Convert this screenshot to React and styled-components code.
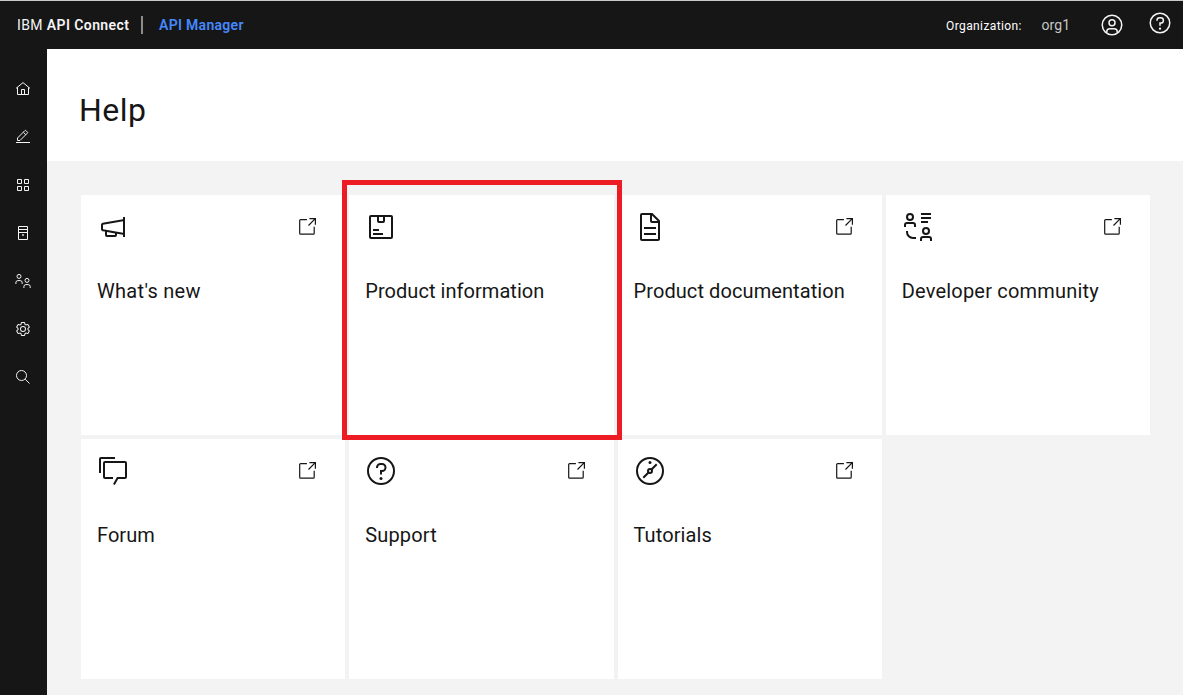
import React from "react";
import styled, { createGlobalStyle } from "styled-components";

const GlobalStyle = createGlobalStyle`
  * { box-sizing: border-box; }
  body { margin: 0; background: #fff; font-family: Roboto, "Liberation Sans", sans-serif; color: #161616; }
`;

const Shell = styled.div`
  width: 1183px;
  height: 695px;
  display: flex;
  flex-direction: column;
  overflow: hidden;
`;

const Header = styled.header`
  height: 49px;
  flex: none;
  display: flex;
  align-items: center;
  padding: 0 11px 0 17px;
  background: #161616;
  border-top: 1px solid #c6cac8;
  color: #f4f4f4;
  font-size: 14px;
  white-space: nowrap;
`;

const Brand = styled.div`
  width: 124px;
  letter-spacing: 0.4px;
  strong { font-weight: 600; }
`;

const Divider = styled.span`
  width: 2px;
  height: 18px;
  background: #8d8d8d;
  margin-right: 16px;
`;

const AppName = styled.div`
  color: #4589ff;
  font-weight: 600;
  letter-spacing: 0.3px;
  flex: 1;
`;

const OrgLabel = styled.span`
  width: 95px;
  padding-top: 2px;
  color: #fff;
  font-size: 12px;
  letter-spacing: 0.4px;
`;

const OrgName = styled.span`
  width: 59px;
  padding-left: 0.5px;
  color: #c6c6c6;
  letter-spacing: 0.1px;
`;

const HeaderIcon = styled.span`
  display: flex;
  margin-left: ${(p) => p.$gap || 0}px;
  padding-bottom: ${(p) => p.$lift || 0}px;
`;

const Body = styled.div`
  flex: 1;
  display: flex;
  min-height: 0;
`;

const Sidebar = styled.nav`
  width: 47px;
  flex: none;
  display: flex;
  flex-direction: column;
  padding-top: 16px;
  background: #161616;
`;

const NavItem = styled.a`
  height: 48px;
  display: flex;
  align-items: center;
  padding-left: 15px;
  color: #f4f4f4;
`;

const Main = styled.main`
  flex: 1;
  display: flex;
  flex-direction: column;
  background: #f3f3f3;
`;

const TitleBar = styled.div`
  height: 112px;
  display: flex;
  align-items: center;
  padding: 10px 0 0 32px;
  background: #fff;
`;

const Title = styled.h1`
  margin: 0;
  font-size: 32px;
  line-height: 40px;
  font-weight: 400;
  letter-spacing: 0.5px;
`;

const Tiles = styled.div`
  display: grid;
  grid-template-columns: repeat(4, 1fr);
  grid-auto-rows: 240px;
  gap: 4px;
  padding: 34px 33px 0 34px;
`;

const Tile = styled.a`
  position: relative;
  display: flex;
  flex-direction: column;
  padding: 16px;
  background: #fff;
`;

const TileTop = styled.div`
  height: 32px;
  display: flex;
  justify-content: space-between;
  padding-right: 11px;
`;

const LaunchSlot = styled.span`
  display: flex;
  padding-top: 6px;
`;

const TileLabel = styled.div`
  margin-top: 34px;
  font-size: 20px;
  line-height: 28px;
  letter-spacing: ${(p) => p.$spacing}px;
  white-space: nowrap;
`;

const Highlight = styled.div`
  position: absolute;
  z-index: 2;
  left: -7px;
  top: -15px;
  width: 280px;
  height: 260px;
  border: 5px solid #ed1c24;
`;

const Glyph = ({ size = 32, children }) => (
  <svg width={size} height={size} viewBox="0 0 32 32" fill="currentColor">{children}</svg>
);

const NavGlyph = ({ children }) => (
  <svg width="16" height="16" viewBox="0 0 16 16" fill="none" stroke="currentColor" strokeWidth="1">{children}</svg>
);

const HelpShape = () => (
  <>
    <path d="M16,2A14,14,0,1,0,30,16,14,14,0,0,0,16,2Zm0,26A12,12,0,1,1,28,16,12,12,0,0,1,16,28Z" />
    <circle cx="16" cy="23.5" r="1.5" />
    <path d="M17,8H15.5A4.49,4.49,0,0,0,11,12.49v.5h2v-.5A2.5,2.5,0,0,1,15.5,10H17a2.5,2.5,0,0,1,0,5H15v4.5h2V17a4.5,4.5,0,0,0,0-9Z" />
  </>
);

const Launch = () => (
  <svg width="20" height="20" viewBox="0 0 20 20" fill="none" stroke="#161616" strokeWidth="1.2">
    <path d="M8.9 2.7H2.6a.9.9 0 0 0-.9.9v12.7c0 .5.4.9.9.9h12.7c.5 0 .9-.4.9-.9v-6.5" />
    <path d="M11.4 1.6h6v6.1M17.3 1.7l-6.8 6.8" />
  </svg>
);

const icons = {
  news: <path d="M26,6V8.17L5.64,11.87A2,2,0,0,0,4,13.84v4.32a2,2,0,0,0,1.64,1.97L8,20.56V24a2,2,0,0,0,2,2h8a2,2,0,0,0,2-2V22.74l6,1.09V26h2V6ZM18,24H10V20.93l8,1.45ZM6,18.17V13.83L26,10.2V21.8Z" />,
  product: <path d="M8,18H14V20H8ZM8,22H18V24H8ZM26,4H6A2,2,0,0,0,4,6V26a2,2,0,0,0,2,2H26a2,2,0,0,0,2-2V6A2,2,0,0,0,26,4ZM18,6v4H14V6ZM6,26V6h6v4a2,2,0,0,0,2,2h4a2,2,0,0,0,2-2V6h6V26Z" />,
  document: (
    <>
      <path d="M25.7,9.3l-7-7C18.5,2.1,18.3,2,18,2H8C6.9,2,6,2.9,6,4v24c0,1.1,0.9,2,2,2h16c1.1,0,2-0.9,2-2V10C26,9.7,25.9,9.5,25.7,9.3z M18,4.4l5.6,5.6H18V4.4z M24,28H8V4h8v6c0,1.1,0.9,2,2,2h6V28z" />
      <path d="M10 22h12v2H10zM10 16h12v2H10z" />
    </>
  ),
  community: (
    <>
      <path d="M6,21V20H4v1a7,7,0,0,0,7,7h3V26H11A5,5,0,0,1,6,21ZM19 2h10v2H19zM19 6h10v2H19zM19 10h7v2H19z" />
      <g fill="none" stroke="currentColor" strokeWidth="2">
        <circle cx="8" cy="6" r="3" />
        <path d="M3 16v-2a2 2 0 0 1 2-2h6a2 2 0 0 1 2 2v2" />
        <circle cx="24" cy="20" r="3" />
        <path d="M19 30v-2a2 2 0 0 1 2-2h6a2 2 0 0 1 2 2v2" />
      </g>
    </>
  ),
  forum: (
    <g fill="none" stroke="currentColor" strokeWidth="2">
      <path d="M3 18V4a1 1 0 0 1 1-1h14" />
      <path d="M16 23H8a1 1 0 0 1-1-1V8a1 1 0 0 1 1-1h20a1 1 0 0 1 1 1v14a1 1 0 0 1-1 1h-7.4l-3.7 6.5" />
    </g>
  ),
  support: <HelpShape />,
  tutorials: (
    <>
      <circle cx="16" cy="7.5" r="1.5" />
      <g fill="none" stroke="currentColor" strokeWidth="2">
        <circle cx="16" cy="16" r="13" />
        <circle cx="16" cy="16" r="2" />
        <path d="M9.3 22.7l5.2-5.2M17.5 14.5l5.2-5.2" />
      </g>
    </>
  ),
};

const navIcons = [
  <path d="M1 7.4L8 1.6l7 5.8M2.5 6.4v7.1h11V6.4M6.5 13.5v-5h3v5" />,
  <>
    <path d="M1 13.5h14" />
    <path d="M2.5 11.5V9L9.9 1.6a.7.7 0 0 1 1 0l1.5 1.5a.7.7 0 0 1 0 1L5 11.5zM8.4 3.3l2.4 2.4" />
  </>,
  <path d="M2.5 2.5h4v4h-4zM9.5 2.5h4v4h-4zM2.5 9.5h4v4h-4zM9.5 9.5h4v4h-4z" />,
  <>
    <path d="M3.5 1.5h9v13h-9zM3.5 4.5h9M3.5 7.5h9" />
    <path d="M7 10h2" strokeWidth="2" opacity="0.65" />
  </>,
  <>
    <circle cx="4" cy="3.4" r="2" />
    <path d="M.9 11V9.6a2 2 0 0 1 2-2h2.3a2 2 0 0 1 2 2V11" />
    <circle cx="12" cy="7.4" r="2" />
    <path d="M8.9 15v-1.4a2 2 0 0 1 2-2h2.3a2 2 0 0 1 2 2V15" />
  </>,
  <svg width="16" height="16" viewBox="0 0 32 32" fill="currentColor" stroke="none">
    <path d="M27,16.76c0-.25,0-.5,0-.76s0-.51,0-.77l1.92-1.68A2,2,0,0,0,29.3,11L26.94,7a2,2,0,0,0-1.73-1,2,2,0,0,0-.64.1l-2.43.82a11.35,11.35,0,0,0-1.31-.75l-.51-2.52a2,2,0,0,0-2-1.61H13.64a2,2,0,0,0-2,1.61l-.51,2.52a11.48,11.48,0,0,0-1.32.75L7.43,6.06A2,2,0,0,0,6.79,6,2,2,0,0,0,5.06,7L2.7,11a2,2,0,0,0,.41,2.51L5,15.24c0,.25,0,.5,0,.76s0,.51,0,.77L3.11,18.45A2,2,0,0,0,2.7,21L5.06,25a2,2,0,0,0,1.73,1,2,2,0,0,0,.64-.1l2.43-.82a11.35,11.35,0,0,0,1.31.75l.51,2.52a2,2,0,0,0,2,1.61h4.72a2,2,0,0,0,2-1.61l.51-2.52a11.48,11.48,0,0,0,1.32-.75l2.42.82a2,2,0,0,0,.64.1,2,2,0,0,0,1.73-1L29.3,21a2,2,0,0,0-.41-2.51ZM25.21,24l-3.43-1.16a8.86,8.86,0,0,1-2.71,1.57L18.36,28H13.64l-.71-3.55a9.36,9.36,0,0,1-2.7-1.57L6.79,24,4.43,20l2.72-2.4a8.9,8.9,0,0,1,0-3.13L4.43,12,6.79,8l3.43,1.16a8.86,8.86,0,0,1,2.71-1.57L13.64,4h4.72l.71,3.55a9.36,9.36,0,0,1,2.7,1.57L25.21,8,27.57,12l-2.72,2.4a8.9,8.9,0,0,1,0,3.13L27.57,20Z" />
    <path d="M16,22a6,6,0,1,1,6-6A5.94,5.94,0,0,1,16,22Zm0-10a3.91,3.91,0,0,0-4,4,3.91,3.91,0,0,0,4,4,3.91,3.91,0,0,0,4-4A3.91,3.91,0,0,0,16,12Z" />
  </svg>,
  <>
    <circle cx="6.5" cy="6.5" r="5" />
    <path d="M10.2 10.2l4.3 4.3" />
  </>,
];

const tiles = [
  { label: "What's new", icon: "news", link: true, spacing: 0.3 },
  { label: "Product information", icon: "product", highlight: true, spacing: 0.05 },
  { label: "Product documentation", icon: "document", link: true, spacing: 0.09 },
  { label: "Developer community", icon: "community", link: true, spacing: 0.19 },
  { label: "Forum", icon: "forum", link: true, spacing: 0.05 },
  { label: "Support", icon: "support", link: true, spacing: 0.15 },
  { label: "Tutorials", icon: "tutorials", link: true, spacing: 0.1 },
];

export default function App() {
  return (
    <Shell>
      <GlobalStyle />
      <Header>
        <Brand>IBM <strong>API Connect</strong></Brand>
        <Divider />
        <AppName>API Manager</AppName>
        <OrgLabel>Organization:</OrgLabel>
        <OrgName>org1</OrgName>
        <HeaderIcon>
          <Glyph size={24}>
            <path d="M16,8a5,5,0,1,0,5,5A5,5,0,0,0,16,8Zm0,8a3,3,0,1,1,3-3A3,3,0,0,1,16,16Z" />
            <path d="M16,2A14,14,0,1,0,30,16,14,14,0,0,0,16,2ZM10,26.38V25a3,3,0,0,1,3-3h6a3,3,0,0,1,3,3v1.38a11.9,11.9,0,0,1-12,0Zm13.99-1.45A5,5,0,0,0,19,20H13a5,5,0,0,0-4.99,4.93,12,12,0,1,1,15.98,0Z" />
          </Glyph>
        </HeaderIcon>
        <HeaderIcon $gap={24} $lift={4}>
          <Glyph size={24}><HelpShape /></Glyph>
        </HeaderIcon>
      </Header>
      <Body>
        <Sidebar>
          {navIcons.map((icon, i) => (
            <NavItem key={i}><NavGlyph>{icon}</NavGlyph></NavItem>
          ))}
        </Sidebar>
        <Main>
          <TitleBar><Title>Help</Title></TitleBar>
          <Tiles>
            {tiles.map((t) => (
              <Tile key={t.label}>
                <TileTop>
                  <Glyph>{icons[t.icon]}</Glyph>
                  {t.link && <LaunchSlot><Launch /></LaunchSlot>}
                </TileTop>
                <TileLabel $spacing={t.spacing}>{t.label}</TileLabel>
                {t.highlight && <Highlight />}
              </Tile>
            ))}
          </Tiles>
        </Main>
      </Body>
    </Shell>
  );
}
